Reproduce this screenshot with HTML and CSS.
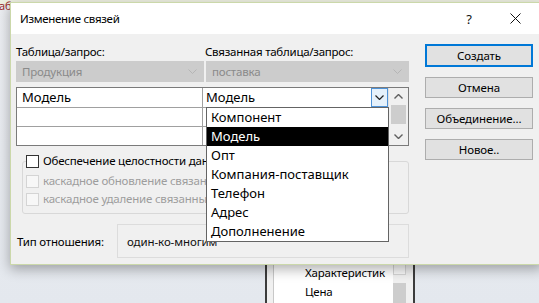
FILE: index.html
```html
<!DOCTYPE html>
<html>
<head>
<meta charset="utf-8">
<link rel="stylesheet" href="styles.css">
</head>
<body>
<div class="topstrip"><span class="redtxt">аб</span></div>

<div class="backwin">
  <div class="bw-list">
    <div class="bw-item">Характеристик</div>
    <div class="bw-item">Цена</div>
  </div>
  <div class="bw-scroll"><div class="bw-box"></div><div class="bw-thumb"></div></div>
</div>

<div class="dialog">
  <div class="titlebar">
    <span class="title">Изменение связей</span>
    <span class="tbtn help">?</span>
    <span class="tbtn close"><svg width="11" height="11" viewBox="0 0 11 11"><path d="M0.5 0.5L10.5 10.5M10.5 0.5L0.5 10.5" stroke="#111" stroke-width="1"/></svg></span>
  </div>
  <div class="dbody">
    <div class="leftcol">
      <div class="combos">
        <div class="field">
          <div class="lbl">Таблица/запрос:</div>
          <div class="combo"><span>Продукция</span><svg width="9" height="5" viewBox="0 0 9 5"><polyline points="0.5,0.5 4.5,4.5 8.5,0.5" fill="none" stroke="#b5b5b5" stroke-width="1"/></svg></div>
        </div>
        <div class="field">
          <div class="lbl">Связанная таблица/запрос:</div>
          <div class="combo"><span>поставка</span><svg width="9" height="5" viewBox="0 0 9 5"><polyline points="0.5,0.5 4.5,4.5 8.5,0.5" fill="none" stroke="#b5b5b5" stroke-width="1"/></svg></div>
        </div>
      </div>

      <div class="grid">
        <div class="cells">
          <div class="row r1"><div class="c1">Модель</div><div class="c2">Модель<span class="ddbtn"><svg width="9" height="5" viewBox="0 0 9 5"><polyline points="0.5,0.5 4.5,4.5 8.5,0.5" fill="none" stroke="#222" stroke-width="1.2"/></svg></span></div></div>
          <div class="row r2"><div class="c1"></div><div class="c2"></div></div>
          <div class="row r3"><div class="c1"></div><div class="c2"></div></div>
        </div>
        <div class="vscroll">
          <div class="sarrow"><svg width="9" height="5" viewBox="0 0 9 5"><polyline points="0.5,4.5 4.5,0.5 8.5,4.5" fill="none" stroke="#606060" stroke-width="1.4"/></svg></div>
          <div class="sthumb"></div>
          <div class="sarrow down"><svg width="9" height="5" viewBox="0 0 9 5"><polyline points="0.5,0.5 4.5,4.5 8.5,0.5" fill="none" stroke="#606060" stroke-width="1.4"/></svg></div>
        </div>
        <div class="dropdown">
          <div class="ditem">Компонент</div>
          <div class="ditem sel">Модель</div>
          <div class="ditem">Опт</div>
          <div class="ditem">Компания-поставщик</div>
          <div class="ditem">Телефон</div>
          <div class="ditem">Адрес</div>
          <div class="ditem">Дополненение</div>
        </div>
      </div>

      <fieldset class="integrity">
        <legend class="chkrow"><span class="chk"></span>Обеспечение целостности данных</legend>
        <div class="chkrow dis"><span class="chk"></span>каскадное обновление связанных полей</div>
        <div class="chkrow dis"><span class="chk"></span>каскадное удаление связанных записей</div>
      </fieldset>

      <div class="reltype">
        <div class="rlabel">Тип отношения:</div>
        <div class="rbox">один-ко-многим</div>
      </div>
    </div>

    <div class="buttons">
      <div class="btn default">Создать</div>
      <div class="btn">Отмена</div>
      <div class="btn">Объединение...</div>
      <div class="btn">Новое..</div>
    </div>
  </div>
</div>
</body>
</html>
```

FILE: styles.css
```css
html, body {
  margin: 0;
  padding: 0;
}
body {
  width: 539px;
  height: 303px;
  overflow: hidden;
  position: relative;
  background: linear-gradient(#eceef2, #e4e8ee);
  font-family: "Noto Sans", "DejaVu Sans", sans-serif;
  color: #000;
}

.topstrip {
  position: absolute;
  left: 0;
  top: 0;
  right: 0;
  height: 4px;
  background: #eef0e2;
  border-bottom: 1px solid #d9dccb;
}
.redtxt {
  position: absolute;
  left: -1px;
  top: -1px;
  font-size: 11px;
  line-height: 13px;
  color: #9b2b2b;
}

.backwin {
  position: absolute;
  left: 265px;
  top: 255px;
  width: 140px;
  height: 60px;
  border-left: 2px solid #3c3c3c;
  border-right: 2px solid #3c3c3c;
  background: #f0f0f0;
  display: flex;
  padding-left: 6px;
}
.bw-list {
  flex: 1;
  background: #fff;
  border-left: 1px solid #c8c8c8;
  padding: 8px 0 0 31px;
}
.bw-item {
  font-size: 11.5px;
  letter-spacing: -0.2px;
  line-height: 19px;
  white-space: nowrap;
}
.bw-scroll {
  width: 13px;
  margin-right: 7px;
  background: #f0f0f0;
  display: flex;
  flex-direction: column;
}
.bw-box {
  height: 18px;
  border: 1px solid #d6d6d6;
  background: #fafafa;
}
.bw-thumb {
  margin-top: 8px;
  height: 20px;
  background: #cdcdcd;
}

.dialog {
  position: absolute;
  left: 10px;
  top: 2px;
  width: 531px;
  height: 261px;
  border: 1px solid #cbd8aa;
  background: #f0f0f0;
  box-shadow: 0 4px 12px rgba(0, 0, 0, 0.32);
}

.titlebar {
  height: 31px;
  background: #fff;
  display: flex;
  align-items: center;
  padding-left: 9px;
}
.title {
  font-size: 11.5px;
  letter-spacing: -0.3px;
  flex: 1;
}
.tbtn {
  width: 46px;
  height: 31px;
  display: flex;
  align-items: center;
  justify-content: center;
}
.help {
  font-size: 13px;
  color: #111;
}
.close {
  margin-right: 4px;
}

.dbody {
  display: flex;
  padding: 10px 0 0 5px;
}
.leftcol {
  width: 393px;
}
.combos {
  display: grid;
  grid-template-columns: 188px 1fr;
  column-gap: 2px;
}
.lbl {
  font-size: 11.5px;
  letter-spacing: -0.25px;
  line-height: 16px;
  margin-bottom: 1px;
  white-space: nowrap;
}
.field:last-child .lbl {
  margin-left: -1px;
}
.combo {
  height: 21px;
  background: #cccccc;
  color: #8a8a8a;
  font-size: 11.5px;
  letter-spacing: -0.2px;
  display: flex;
  align-items: center;
  justify-content: space-between;
  padding: 0 7px 0 6px;
}
.combo svg {
  display: block;
}

.grid {
  position: relative;
  margin-top: 5px;
  height: 57px;
  border: 1px solid #7a7a7a;
  background: #fff;
  display: flex;
}
.cells {
  flex: 1;
}
.row {
  display: grid;
  grid-template-columns: 186px 1fr;
  font-size: 13px;
}
.r1 { height: 19px; border-bottom: 1px solid #a0a0a0; }
.r2 { height: 18px; border-bottom: 1px solid #a0a0a0; }
.r3 { height: 18px; }
.c1 {
  border-right: 1px solid #a0a0a0;
  padding-left: 5px;
  line-height: 19px;
}
.c2 {
  position: relative;
  padding-left: 3px;
  line-height: 19px;
}
.ddbtn {
  position: absolute;
  right: 0;
  top: 0;
  width: 15px;
  height: 17px;
  border: 1px solid #4f93d8;
  background: #e5f1fb;
  display: flex;
  align-items: center;
  justify-content: center;
}
.ddbtn svg { display: block; }

.vscroll {
  width: 19px;
  background: #f0f0f0;
  border-left: 1px solid #e0e0e0;
  display: flex;
  flex-direction: column;
  align-items: center;
}
.sarrow {
  height: 17px;
  display: flex;
  align-items: center;
  justify-content: center;
}
.sarrow svg { display: block; }
.sthumb {
  width: 15px;
  height: 19px;
  background: #cdcdcd;
  margin-bottom: 3px;
}
.sarrow.down {
  height: 18px;
}

.dropdown {
  position: absolute;
  left: 189px;
  top: 19px;
  width: 181px;
  border: 1px solid #646464;
  background: #fff;
  z-index: 5;
}
.ditem {
  height: 19px;
  line-height: 19px;
  font-size: 13px;
  padding-left: 4px;
  white-space: nowrap;
}
.ditem.sel {
  background: #000;
  color: #fff;
}

.integrity {
  margin: 7px 0 0 6px;
  padding: 0 0 5px 3px;
  border: 1px solid #d8d8d8;
  border-radius: 3px;
  min-width: 0;
}
.integrity legend {
  padding: 0;
  background: #f0f0f0;
  color: #000;
  line-height: 16px;
}
.chkrow {
  font-size: 11.5px;
  letter-spacing: -0.2px;
  display: flex;
  align-items: center;
  white-space: nowrap;
  line-height: 18px;
}
.chk {
  width: 11px;
  height: 11px;
  border: 1px solid #333;
  background: #fff;
  margin-right: 4px;
  flex: none;
}
.chkrow.dis {
  color: #9d9d9d;
}
.integrity legend + .chkrow {
  margin-top: 3px;
}
.chkrow.dis .chk {
  border-color: #d4d4d4;
  background: #f7f7f7;
}

.reltype {
  margin-top: 10px;
  display: flex;
  align-items: center;
  height: 34px;
}
.rlabel {
  width: 100px;
  padding-left: 1px;
  font-size: 11.5px;
  letter-spacing: -0.2px;
}
.rbox {
  flex: 1;
  height: 32px;
  border: 1px solid #dcdcdc;
  padding-left: 9px;
  display: flex;
  align-items: center;
  font-size: 11.5px;
  letter-spacing: -0.1px;
  color: #111;
}

.buttons {
  margin-left: 16px;
  width: 108px;
  display: flex;
  flex-direction: column;
  gap: 10px;
}
.btn {
  height: 19px;
  border: 1px solid #adadad;
  background: #e1e1e1;
  font-size: 11.5px;
  letter-spacing: -0.1px;
  display: flex;
  align-items: center;
  justify-content: center;
}
.btn.default {
  height: 21px;
  border-color: #0078d7;
  box-shadow: inset 0 0 0 1px #0078d7;
}
```
